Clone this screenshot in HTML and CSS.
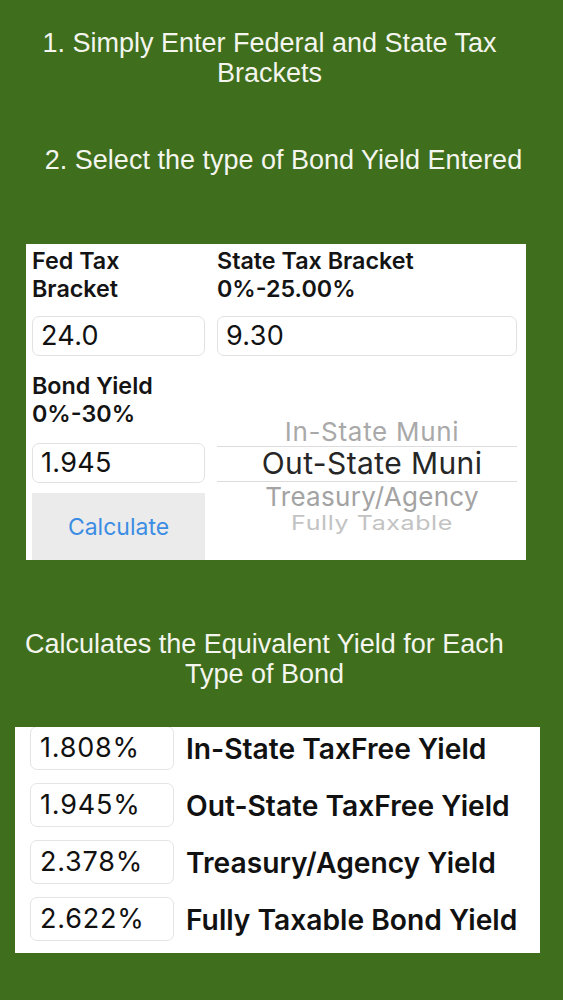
FILE: index.html
```html
<!DOCTYPE html>
<html lang="en">
<head>
<meta charset="utf-8">
<title>Tax Equivalent Yield</title>
<link rel="stylesheet" href="styles.css">
</head>
<body>
<main class="screen">
  <p class="intro intro-1">1. Simply Enter Federal and State Tax<br>Brackets</p>
  <p class="intro intro-2">2. Select the type of Bond Yield Entered</p>

  <section class="calc-card">
    <div class="col col-left">
      <div class="field-label">Fed Tax<br>Bracket</div>
      <div class="field-input">24.0</div>
      <div class="field-label label-bond">Bond Yield<br>0%-30%</div>
      <div class="field-input input-bond">1.945</div>
      <button class="calc-btn" type="button">Calculate</button>
    </div>
    <div class="col col-right">
      <div class="field-label">State Tax Bracket<br>0%-25.00%</div>
      <div class="field-input">9.30</div>
      <div class="picker">
        <div class="pick pick-1">In-State Muni</div>
        <div class="pick pick-sel">Out-State Muni</div>
        <div class="pick pick-3">Treasury/Agency</div>
        <div class="pick pick-4">Fully Taxable</div>
      </div>
    </div>
  </section>

  <p class="intro intro-3">Calculates the Equivalent Yield for Each<br>Type of Bond</p>

  <section class="results">
    <div class="result-row"><div class="result-value">1.808%</div><div class="result-label">In-State TaxFree Yield</div></div>
    <div class="result-row"><div class="result-value">1.945%</div><div class="result-label">Out-State TaxFree Yield</div></div>
    <div class="result-row"><div class="result-value">2.378%</div><div class="result-label">Treasury/Agency Yield</div></div>
    <div class="result-row"><div class="result-value">2.622%</div><div class="result-label">Fully Taxable Bond Yield</div></div>
  </section>
</main>
</body>
</html>
```

FILE: styles.css
```css
* { box-sizing: border-box; }

html, body {
  margin: 0;
  padding: 0;
  background: #3f6e1c;
}

body {
  font-family: "Liberation Sans", Arial, Helvetica, sans-serif;
  color: #111;
  min-height: 1000px;
}

.screen {
  width: 563px;
  min-height: 1000px;
  overflow: hidden;
}

.intro {
  margin: 0;
  color: #f3f5ee;
  font-size: 27px;
  line-height: 30px;
  text-align: center;
  white-space: nowrap;
}

.intro-1 {
  margin-top: 28px;
  padding-right: 24px;
}

.intro-2 {
  margin-top: 57px;
  padding-left: 4px;
}

.intro-3 {
  margin-top: 69px;
  padding-right: 34px;
}

/* ---------- input card ---------- */
.calc-card {
  margin: 69px 0 0 26px;
  width: 500px;
  height: 316px;
  background: #fff;
  padding: 3px 9px 0 6px;
  display: grid;
  grid-template-columns: 173px 300px;
  column-gap: 12px;
  align-items: start;
  font-family: Inter, "Liberation Sans", Arial, sans-serif;
}

.col {
  display: flex;
  flex-direction: column;
}

.field-label {
  font-size: 23.3px;
  font-weight: 600;
  line-height: 28px;
  color: #141414;
  white-space: nowrap;
}

.field-input {
  margin-top: 13px;
  height: 40px;
  border: 1px solid #e2e2e2;
  border-radius: 7px;
  padding: 1px 0 0 8px;
  font-size: 27px;
  line-height: 36px;
  letter-spacing: 0.3px;
  color: #111;
}

.label-bond { margin-top: 16px; }
.input-bond { margin-top: 15px; }

.calc-btn {
  margin-top: 10px;
  height: 67px;
  width: 100%;
  border: none;
  border-radius: 0;
  background: #ebebeb;
  color: #3b8de3;
  font-family: Inter, "Liberation Sans", Arial, sans-serif;
  font-size: 23px;
  padding: 0;
}

/* ---------- picker wheel ---------- */
.picker {
  margin-top: 60px;
}

.pick {
  text-align: center;
  padding-left: 10px;
  white-space: nowrap;
}

.pick-1 {
  height: 30px;
  font-size: 26px;
  line-height: 32px;
  letter-spacing: 0.7px;
  color: #a9a9a9;
}

.pick-sel {
  height: 36px;
  border-top: 1px solid #dcdcdc;
  border-bottom: 1px solid #dcdcdc;
  font-size: 30px;
  line-height: 32px;
  letter-spacing: 0.4px;
  color: #262626;
}

.pick-3 {
  height: 24px;
  font-size: 26px;
  line-height: 29px;
  letter-spacing: 0.3px;
  color: #a3a3a3;
}

.pick-4 {
  height: 28px;
  font-size: 25px;
  line-height: 30px;
  letter-spacing: 0.6px;
  color: #c3c3c3;
  transform: scaleY(0.8);
  transform-origin: 50% 24px;
}

/* ---------- results card ---------- */
.results {
  margin: 38px 0 0 15px;
  width: 525px;
  background: #fff;
  padding: 0 0 12px 15px;
  overflow: hidden;
  display: flex;
  flex-direction: column;
  gap: 13px;
  font-family: Inter, "Liberation Sans", Arial, sans-serif;
}

.result-row {
  display: flex;
  align-items: flex-start;
  height: 44px;
}

.result-row:first-child { margin-top: -1px; }

.result-value {
  flex: none;
  width: 144px;
  height: 44px;
  border: 1px solid #e4e4e4;
  border-radius: 7px;
  padding: 0 0 0 9px;
  font-size: 27px;
  line-height: 41px;
  letter-spacing: 0.8px;
  color: #111;
}

.result-label {
  margin-left: 12px;
  font-size: 28.2px;
  font-weight: 600;
  line-height: 46px;
  color: #111;
  white-space: nowrap;
}
```
